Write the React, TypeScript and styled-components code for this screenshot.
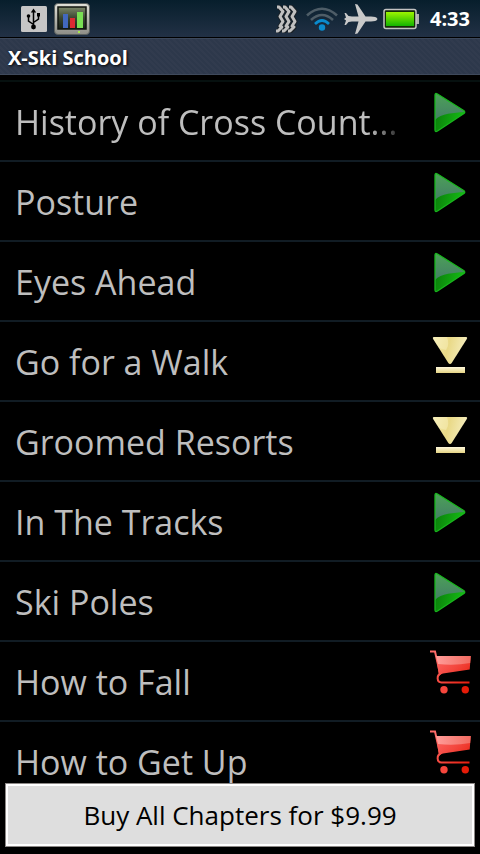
import React from 'react';
import styled, { createGlobalStyle } from 'styled-components';

const GlobalStyle = createGlobalStyle`
  * { box-sizing: border-box; }
  body {
    margin: 0;
    background: #000;
    font-family: "Open Sans", "Noto Sans", sans-serif;
  }
  button { font-family: inherit; cursor: pointer; }
`;

const Screen = styled.div`
  display: flex;
  flex-direction: column;
  height: 100vh;
  overflow: hidden;
  background: #000;
`;

const StatusBar = styled.header`
  display: flex;
  flex: none;
  align-items: center;
  justify-content: space-between;
  height: 38px;
  padding: 0 10px 0 20px;
  background: linear-gradient(#071e2c, #223145);
  border-bottom: 1px solid #000;
`;

const StatusGroup = styled.div`
  display: flex;
  align-items: center;
  gap: 5px;
  svg { display: block; }
`;

const Clock = styled.time`
  margin-left: 5px;
  color: #fff;
  font-size: 20px;
  font-weight: 700;
  line-height: 38px;
`;

const TitleBar = styled.h1`
  flex: none;
  height: 37px;
  margin: 0;
  padding: 0 8px;
  border-top: 1px solid #3c485b;
  border-bottom: 1px solid #3f4a5c;
  background: repeating-linear-gradient(45deg, #2d384b 0 2px, #313b4e 2px 4px);
  color: #fff;
  font-size: 20px;
  font-weight: 700;
  line-height: 38px;
  text-shadow: 1px 1px 3px #000;
`;

const ChapterList = styled.ul`
  flex: 1;
  min-height: 0;
  margin: 5px 0 0;
  padding: 0;
  border-top: 2px solid #06100f;
  overflow: hidden;
  list-style: none;
`;

const ChapterRow = styled.li`
  border-bottom: 2px solid #111c24;
`;

const ChapterButton = styled.button`
  display: flex;
  align-items: flex-start;
  width: 100%;
  height: 78px;
  padding: 0 6px 0 15px;
  border: 0;
  background: none;
  color: #bebebe;
  text-align: left;
`;

const ChapterTitle = styled.span<{ $fades?: boolean }>`
  flex: 1;
  min-width: 0;
  margin-right: 20px;
  overflow: hidden;
  font-size: 34px;
  line-height: 80px;
  white-space: nowrap;
  ${({ $fades }) => $fades && 'mask-image: linear-gradient(to right, #000 calc(100% - 36px), transparent);'}
`;

const RowIcon = styled.svg`
  flex: none;
  display: block;
  width: 48px;
  height: 60px;
`;

const Footer = styled.footer`
  flex: none;
  padding: 0 5px 7px;
`;

const BuyButton = styled.button`
  display: block;
  width: 100%;
  height: 64px;
  padding: 0;
  border: 1px solid #8c8886;
  background: #dedede;
  box-shadow: inset 0 0 0 2px #fff;
  color: #000;
  font-size: 26px;
  line-height: 60px;
`;

const UsbIcon = () => (
  <svg width="28" height="28" viewBox="0 0 28 28" role="img" aria-label="USB connected">
    <rect x="1" y="1" width="26" height="26" rx="1.5" fill="#c6c6c6" />
    <path d="M13.5 23V6M13.5 19.5L8.5 16V11.5M13.5 17.5L18.5 14V10" fill="none" stroke="#000" strokeWidth="1.5" />
    <path d="M13.5 3.5l2.7 4h-5.4z" />
    <circle cx="13.5" cy="22" r="2.4" />
    <circle cx="8.5" cy="11" r="1.8" />
    <rect x="17" y="8" width="3" height="3.5" />
  </svg>
);

const MonitorIcon = () => (
  <svg width="38" height="34" viewBox="0 0 38 34" role="img" aria-label="System monitor">
    <defs>
      <linearGradient id="case" x2="0" y2="1">
        <stop stopColor="#e0e0d8" /><stop offset="1" stopColor="#8d8d86" />
      </linearGradient>
      <linearGradient id="screen" x2="0" y2="1">
        <stop stopColor="#7d886a" /><stop offset=".5" stopColor="#3a4530" /><stop offset="1" stopColor="#182017" />
      </linearGradient>
    </defs>
    <rect x="1.5" y="1.5" width="35" height="31" rx="3.5" fill="url(#case)" stroke="#5a605f" />
    <rect x="5" y="5" width="28" height="22" fill="url(#screen)" stroke="#11150f" strokeWidth="1.5" />
    <rect x="10" y="12" width="5" height="14" fill="#4268bd" />
    <rect x="17" y="16" width="5" height="10" fill="#db2a32" />
    <rect x="24" y="10" width="6" height="16" fill="#79df53" />
    <rect x="25" y="29" width="2" height="2" fill="#a7ea49" />
  </svg>
);

const VibrateIcon = () => (
  <svg width="24" height="28" viewBox="0 0 24 28" role="img" aria-label="Vibrate">
    <g fill="none" strokeLinejoin="round">
      {[0, 6, 12].map((x) => (
        <g key={x}>
          <path d={`M${x + 1} 2h2l4 4.500-3 5 3 5-3 5 2 1-4 4h-2`} stroke="#1a2127" strokeWidth="5" />
          <path d={`M${x + 1} 2h2l4 4.500-3 5 3 5-3 4.500 2 1-4 4h-2`} stroke="#c0c0c0" strokeWidth="3" />
        </g>
      ))}
    </g>
  </svg>
);

const WifiIcon = () => (
  <svg width="34" height="26" viewBox="0 0 34 26" role="img" aria-label="Wi-Fi">
    <g fill="none" strokeWidth="2.6">
      <path d="M2 9.500Q17-4 32 9.500" stroke="#4e5d67" />
      <path d="M6 14Q17 4 28 14" stroke="#4e5d67" />
      <path d="M10 18Q17 11 24 18" stroke="#0a8bcd" />
    </g>
    <circle cx="17" cy="21.500" r="3.200" fill="#0a8bcd" />
  </svg>
);

const PlaneIcon = () => (
  <svg width="34" height="32" viewBox="0 0 34 32" role="img" aria-label="Airplane mode">
    <path
      d="M33.500 16C33 14.200 30 13.500 27 13.500H21.500L13.500 1.500 11 1 14.500 13.500H8L4.500 13 2 10H.5L2 14.500 0 16 2 17.500.5 22H2L4.500 19 8 18.500H14.500L11 31 13.500 30.500 21.500 18.500H27C30 18.500 33 17.800 33.500 16Z"
      fill="#c9c9c9"
    />
  </svg>
);

const BatteryIcon = () => (
  <svg width="37" height="22" viewBox="0 0 37 22" role="img" aria-label="Battery full">
    <defs>
      <linearGradient id="charge" x2="0" y2="1">
        <stop stopColor="#9cf500" /><stop offset="1" stopColor="#12b300" />
      </linearGradient>
    </defs>
    <rect x="33" y="6" width="3" height="10" fill="#b0b0b0" />
    <rect x="1" y="1.500" width="32" height="19" rx="2" fill="#152a08" stroke="#c3c3c3" strokeWidth="1.500" />
    <rect x="3" y="4" width="28" height="14" fill="url(#charge)" />
  </svg>
);

const PlayIcon = () => (
  <RowIcon viewBox="0 0 48 60" aria-hidden="true">
    <defs>
      <linearGradient id="play-base" x2="1" y2=".3">
        <stop stopColor="#087409" /><stop offset="1" stopColor="#14b813" />
      </linearGradient>
      <linearGradient id="play-shine" x2="0" y2="1">
        <stop stopColor="#4ca158" /><stop offset="1" stopColor="#447f66" />
      </linearGradient>
    </defs>
    <path d="M9 13Q9 10.500 11.500 12L38 28.800Q39.500 30.500 38 31.500L11.500 49Q9 50.500 9 48Z" fill="url(#play-base)" />
    <path d="M9 13Q9 10.500 11.500 12L38 28.800 38.500 30C28 31 15 31 9 38Z" fill="url(#play-shine)" />
    <path d="M9 13Q9 10.500 11.500 12L38 28.800Q39.500 30.500 38 31.500L11.500 49Q9 50.500 9 48Z" fill="none" stroke="#18b51c" strokeWidth="1.300" />
  </RowIcon>
);

const DownloadIcon = () => (
  <RowIcon viewBox="0 0 48 60" aria-hidden="true">
    <defs>
      <linearGradient id="gold" x2="1" y2=".2">
        <stop stopColor="#f3e9ae" /><stop offset=".5" stopColor="#e9d987" /><stop offset="1" stopColor="#f5edbd" />
      </linearGradient>
      <linearGradient id="gold-bar" x2="0" y2="1">
        <stop stopColor="#fff9dc" /><stop offset="1" stopColor="#e5d484" />
      </linearGradient>
    </defs>
    <path d="M8 15H40Q42 15 40.500 17.500L26 40.500Q24 43.500 22 40.500L7.500 17.500Q6 15 8 15Z" fill="url(#gold)" />
    <path d="M21 15Q24 22 20 28L13 26 7.500 17.500Q6 15 8 15Z" fill="#fff8d2" opacity=".35" />
    <rect x="10" y="45" width="29" height="6" fill="url(#gold-bar)" />
  </RowIcon>
);

const CartIcon = () => (
  <RowIcon viewBox="0 0 48 60" aria-hidden="true">
    <defs>
      <linearGradient id="cart-red" gradientUnits="userSpaceOnUse" x1="8" y1="12" x2="44" y2="48">
        <stop stopColor="#ff6b68" /><stop offset=".5" stopColor="#f3453c" /><stop offset="1" stopColor="#e31200" />
      </linearGradient>
      <linearGradient id="cart-shine" x2="1">
        <stop stopColor="#ff9d99" /><stop offset="1" stopColor="#f26b61" />
      </linearGradient>
    </defs>
    <path d="M4 9.500H9L14 31.500M14.700 31.500C10.500 33 10.500 40.500 15.500 40.500H43.500" fill="none" stroke="url(#cart-red)" strokeWidth="2" />
    <path d="M10 14H44.700L43.700 27.500 17 31.500Q14 32 13 34Z" fill="url(#cart-red)" />
    <path d="M10 14H44.700L44.200 21Q28 24 12 22Z" fill="url(#cart-shine)" />
    <circle cx="18" cy="47.700" r="3.700" fill="#f6463c" />
    <circle cx="39.300" cy="47.700" r="3.700" fill="#e61b08" />
  </RowIcon>
);

const icons = { play: PlayIcon, download: DownloadIcon, buy: CartIcon };

const chapters: { title: string; action: keyof typeof icons; fades?: boolean }[] = [
  { title: 'History of Cross Count...', action: 'play', fades: true },
  { title: 'Posture', action: 'play' },
  { title: 'Eyes Ahead', action: 'play' },
  { title: 'Go for a Walk', action: 'download' },
  { title: 'Groomed Resorts', action: 'download' },
  { title: 'In The Tracks', action: 'play' },
  { title: 'Ski Poles', action: 'play' },
  { title: 'How to Fall', action: 'buy' },
  { title: 'How to Get Up', action: 'buy' },
];

export default function App() {
  return (
    <>
      <GlobalStyle />
      <Screen>
        <StatusBar>
          <StatusGroup>
            <UsbIcon />
            <MonitorIcon />
          </StatusGroup>
          <StatusGroup>
            <VibrateIcon />
            <WifiIcon />
            <PlaneIcon />
            <BatteryIcon />
            <Clock>4:33</Clock>
          </StatusGroup>
        </StatusBar>
        <TitleBar>X-Ski School</TitleBar>
        <ChapterList>
          {chapters.map(({ title, action, fades }) => {
            const Icon = icons[action];
            return (
              <ChapterRow key={title}>
                <ChapterButton type="button">
                  <ChapterTitle $fades={fades}>{title}</ChapterTitle>
                  <Icon />
                </ChapterButton>
              </ChapterRow>
            );
          })}
        </ChapterList>
        <Footer>
          <BuyButton type="button">Buy All Chapters for $9.99</BuyButton>
        </Footer>
      </Screen>
    </>
  );
}
